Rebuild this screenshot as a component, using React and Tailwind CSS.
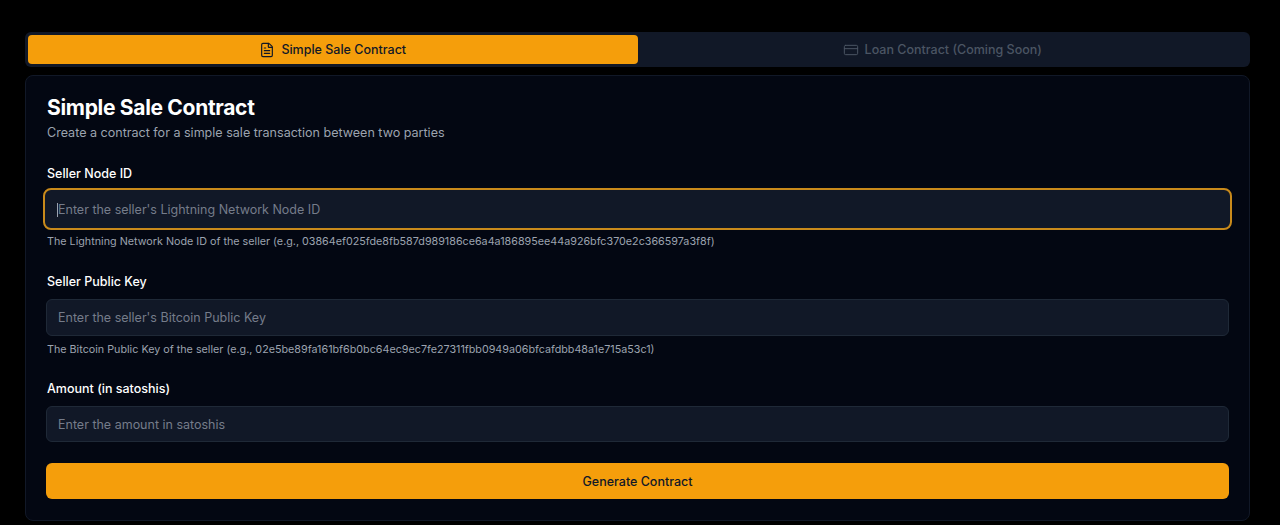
import { FileText, CreditCard } from 'lucide-react'

function Field({ label, placeholder, hint, focused, className = '', inputPad = 'pt-[2px]' }) {
  return (
    <div className={className}>
      <label className="block pl-px text-[12.5px] leading-5 font-medium text-white">{label}</label>
      {focused ? (
        <div className="-mx-[3px] mt-[4px] flex h-[42px] items-center rounded-lg border-[2.5px] border-[#c98a1b] bg-[#111827] pt-[2px] pl-[12px] text-[12.5px] text-[#757c8a]">
          <span className="h-[14px] w-px bg-[#9ca3af]" />
          <span>{placeholder}</span>
        </div>
      ) : (
        <div className={`mt-[7px] flex h-[36.5px] items-center rounded-md border border-[#1f2937] bg-[#111827] px-[11px] text-[12.5px] text-[#757c8a] ${inputPad}`}>
          {placeholder}
        </div>
      )}
      {hint && <p className={`${focused ? 'mt-[4px]' : 'mt-[6px]'} pl-px text-[10.75px] leading-4 text-[#9ca3af]`}>{hint}</p>}
    </div>
  )
}

export default function App() {
  return (
    <div className="min-h-[525px] bg-black pt-[32px] pr-[30px] pl-[25px] font-['Inter',sans-serif]">
      <div className="flex h-[35px] rounded-md bg-[#111827] p-[3px]">
        <button className="flex flex-1 items-center justify-center gap-1.5 rounded-[4px] bg-[#f59e0b] pt-[2px] text-[12.5px] font-medium text-[#111827]">
          <FileText size={16} strokeWidth={1.75} className="-mt-[2px]" />
          Simple Sale Contract
        </button>
        <button className="flex flex-1 items-center justify-center gap-1.5 pt-[2px] text-[12.5px] font-medium text-[#4b5563]">
          <CreditCard size={16} strokeWidth={1.5} className="-mt-[2px]" />
          Loan Contract (Coming Soon)
        </button>
      </div>

      <div className="mt-2 h-[446px] rounded-lg border border-[#111827] bg-[#030712] px-[20px] pt-[18px]">
        <h1 className="pl-px text-[21px] leading-7 font-bold tracking-[-0.015em] text-white">Simple Sale Contract</h1>
        <p className="mt-px pl-px text-[12.55px] leading-5 text-[#9ca3af]">Create a contract for a simple sale transaction between two parties</p>

        <div className="mt-[21px] flex flex-col gap-[21px]">
          <Field
            focused
            label="Seller Node ID"
            placeholder="Enter the seller's Lightning Network Node ID"
            hint="The Lightning Network Node ID of the seller (e.g., 03864ef025fde8fb587d989186ce6a4a186895ee44a926bfc370e2c366597a3f8f)"
          />
          <Field
            className="mt-px"
            label="Seller Public Key"
            placeholder="Enter the seller's Bitcoin Public Key"
            hint="The Bitcoin Public Key of the seller (e.g., 02e5be89fa161bf6b0bc64ec9ec7fe27311fbb0949a06bfcafdbb48a1e715a53c1)"
          />
          <Field inputPad="pt-[4px]" label="Amount (in satoshis)" placeholder="Enter the amount in satoshis" />
        </div>

        <button className="mt-[21px] h-[36px] w-full rounded-md bg-[#f59e0b] pt-[2px] text-[12.5px] font-medium text-[#111827]">
          Generate Contract
        </button>
      </div>
    </div>
  )
}
